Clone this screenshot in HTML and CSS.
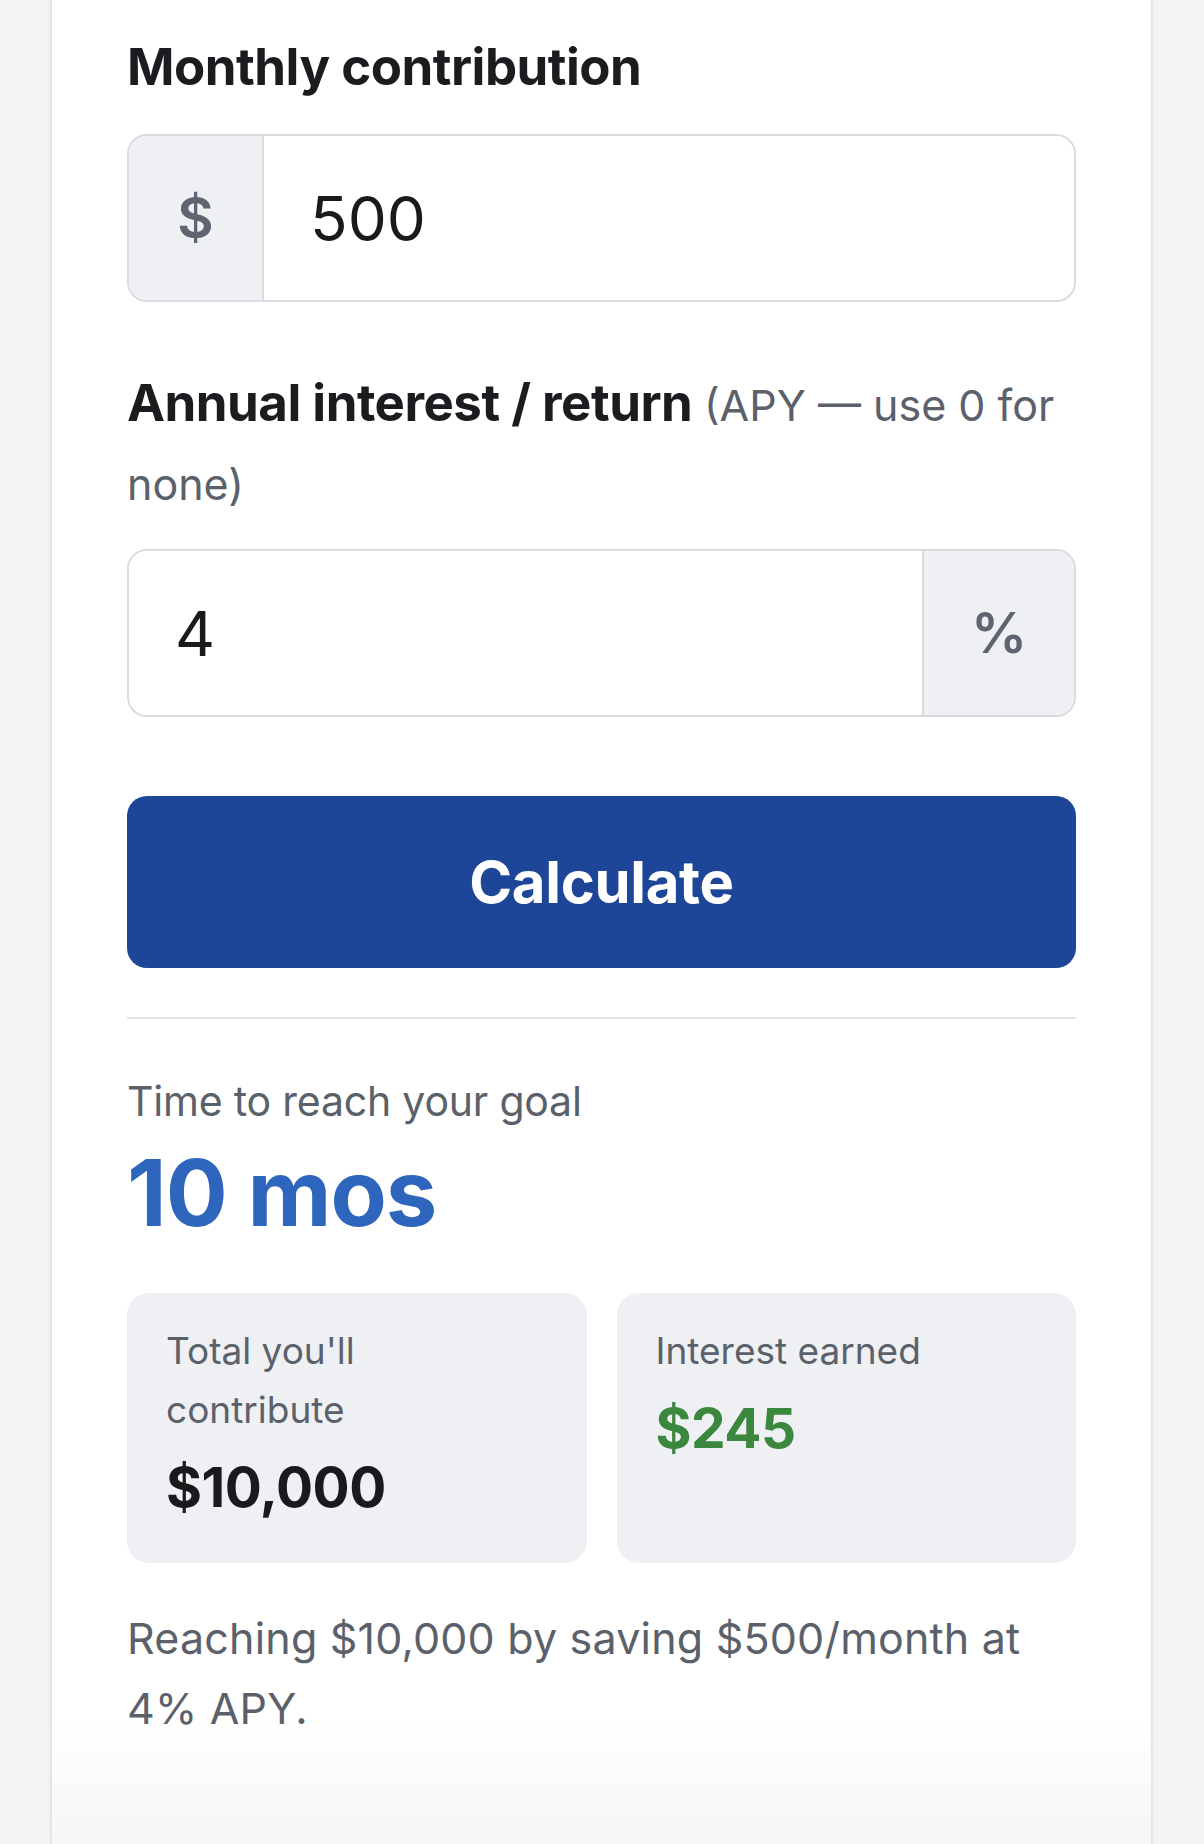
FILE: index.html
```html
<!DOCTYPE html>
<html lang="en">
<head>
    <meta charset="UTF-8">
    <meta name="viewport" content="width=device-width, initial-scale=1.0">
    <title>Savings Goal Calculator</title>
    <link rel="stylesheet" href="styles.css">
</head>
<body>
    <div class="page">
        <main class="card">
            <form class="calc" id="goalForm">
                <label class="field-label" for="monthly">Monthly contribution</label>
                <div class="input-group">
                    <span class="addon">$</span>
                    <input class="input" id="monthly" type="text" value="500">
                </div>

                <label class="field-label" for="rate"><span class="label-main">Annual interest / return</span> <span class="hint">(APY — use 0 for none)</span></label>
                <div class="input-group">
                    <input class="input" id="rate" type="text" value="4">
                    <span class="addon addon-right">%</span>
                </div>

                <button type="submit" class="btn">Calculate</button>
            </form>

            <hr class="divider">

            <section class="result">
                <p class="result-label">Time to reach your goal</p>
                <p class="result-big">10 mos</p>

                <div class="stats">
                    <div class="stat">
                        <p class="stat-label">Total you'll contribute</p>
                        <p class="stat-value">$10,000</p>
                    </div>
                    <div class="stat">
                        <p class="stat-label">Interest earned</p>
                        <p class="stat-value green">$245</p>
                    </div>
                </div>

                <p class="summary">Reaching $10,000 by saving $500/month at 4% APY.</p>
            </section>
        </main>
    </div>
</body>
</html>
```

FILE: styles.css
```css
* {
    box-sizing: border-box;
}

body {
    margin: 0;
    font-family: Inter, "Noto Sans", sans-serif;
    background-color: #f4f5f7;
    color: #1b1c1f;
}

.page {
    padding: 0 51px 0 50px;
}

.card {
    min-height: 100vh;
    background: linear-gradient(to bottom, #fff calc(100% - 130px), #f5f6f7);
    border-left: 2px solid #e3e5e9;
    border-right: 2px solid #e3e5e9;
    box-shadow: 0 0 8px rgba(0, 0, 0, 0.04);
    padding: 27px 75px 101px 75px;
}

.field-label {
    display: block;
    font-size: 51px;
    line-height: 79px;
    font-weight: 700;
    letter-spacing: -0.5px;
    margin-bottom: 28px;
}

.hint {
    font-size: 43px;
    line-height: 1;
    font-weight: 400;
    letter-spacing: 0;
    color: #5b616b;
}

.input-group {
    display: flex;
    height: 168px;
    border: 2px solid #d8dbe0;
    border-radius: 20px;
    overflow: hidden;
    margin-bottom: 61px;
}

.input-group:last-of-type {
    margin-bottom: 0;
}

.addon {
    display: flex;
    align-items: center;
    justify-content: center;
    width: 135px;
    background-color: #eff0f3;
    border-right: 2px solid #d8dbe0;
    color: #5f6570;
    font-size: 56px;
    font-weight: 600;
}

.addon-right {
    width: 152px;
    border-right: none;
    border-left: 2px solid #d8dbe0;
}

.input {
    flex: 1;
    min-width: 0;
    border: none;
    outline: none;
    padding: 0 0 0 46px;
    font: inherit;
    font-size: 62px;
    color: #1a1a1c;
    background: #fff;
}

.btn {
    display: block;
    width: 100%;
    height: 172px;
    margin-top: 79px;
    border: none;
    border-radius: 20px;
    background-color: #1e4698;
    color: #fff;
    font-family: inherit;
    font-size: 58px;
    font-weight: 700;
    letter-spacing: -0.3px;
    cursor: pointer;
}

.divider {
    border: none;
    height: 2px;
    background-color: #e2e4e8;
    margin: 49px 0 52px;
}

.result p {
    margin: 0;
}

.result-label {
    font-size: 41px;
    line-height: 60px;
    letter-spacing: -0.2px;
    color: #5b616b;
}

.result .result-big {
    font-size: 92px;
    line-height: 110px;
    font-weight: 700;
    letter-spacing: -1px;
    color: #2e66bd;
    margin: 7px 0 45px;
}

.stats {
    display: grid;
    grid-template-columns: 1fr 1fr;
    gap: 30px;
}

.stat {
    background-color: #eff0f3;
    border-radius: 22px;
    padding: 28px 60px 43px 39px;
}

.stat-label {
    font-size: 37px;
    line-height: 59px;
    color: #5b616b;
}

.result .stat-value {
    margin-top: 15px;
    font-size: 55px;
    line-height: 66px;
    font-weight: 700;
    letter-spacing: -0.5px;
    color: #1a1a1c;
}

.result .green {
    color: #3a873d;
}

.result .summary {
    margin-top: 40px;
    font-size: 43px;
    line-height: 70px;
    letter-spacing: 0.2px;
    color: #5b616b;
}
```
